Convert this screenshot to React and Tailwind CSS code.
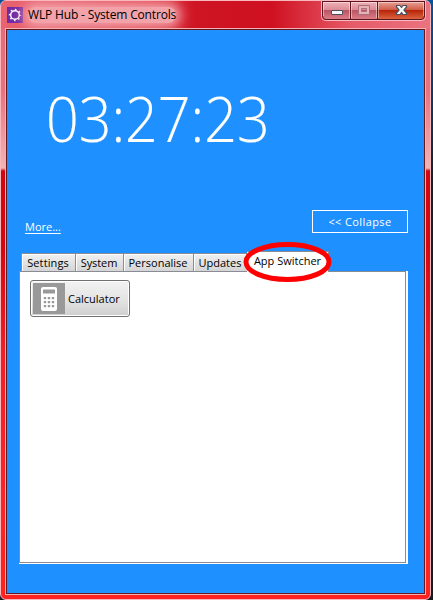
import React from 'react';

const tabs = [
  { label: 'Settings', box: 'w-[54px]', text: 'tracking-[0.1px]' },
  { label: 'System', box: 'w-[48px]', text: 'tracking-[-0.1px]' },
  { label: 'Personalise', box: 'w-[70px]', text: 'tracking-[0px]' },
  { label: 'Updates', box: 'w-[54px]', text: 'tracking-[0px]' },
];

function GearIcon() {
  return (
    <svg className="h-4 w-4 shrink-0" viewBox="0 0 16 16">
      <rect width="16" height="16" fill="#7129a5" />
      <circle cx="8" cy="8" r="4.3" fill="none" stroke="#fff" strokeWidth="1.4" />
      <circle cx="8" cy="8" r="5.5" fill="none" stroke="#fff" strokeWidth="1.4" strokeDasharray="1.6 2.72" strokeDashoffset="0.8" />
    </svg>
  );
}

function CalculatorIcon() {
  return (
    <svg className="h-[31px] w-8 shrink-0" viewBox="0 0 32 31">
      <rect width="32" height="31" fill="#999" />
      <rect x="8" y="4" width="16" height="24" rx="2" fill="#fff" />
      <rect x="10" y="6.5" width="12" height="4" rx=".5" fill="#999" />
      {[15, 19, 23].map((y) =>
        [11, 15, 19].map((x) => <rect key={`${x}-${y}`} x={x - 0.2} y={y - 1} width="2.4" height="2.2" rx="0.4" fill="#999" />)
      )}
    </svg>
  );
}

function WindowButtons() {
  return (
    <svg className="h-[22px] w-[106px] shrink-0" viewBox="0 0 106 22">
      <defs>
        <linearGradient id="pane" x1="0" y1="0" x2="0" y2="1">
          <stop offset="0" stopColor="#efb5bc" />
          <stop offset="0.46" stopColor="#dd8d96" />
          <stop offset="0.5" stopColor="#b95361" />
          <stop offset="1" stopColor="#df7f8a" />
        </linearGradient>
        <linearGradient id="close" x1="0" y1="0" x2="0" y2="1">
          <stop offset="0" stopColor="#e9a79c" />
          <stop offset="0.46" stopColor="#d2604b" />
          <stop offset="0.5" stopColor="#b52407" />
          <stop offset="1" stopColor="#df6743" />
        </linearGradient>
      </defs>
      <path d="M.5 0V15.500q0 4 4 4H100.500q4 0 4-4V0" fill="none" stroke="#f6bcc2" strokeWidth="1" />
      <path d="M1.500 0H56V18.500H5q-3.500 0-3.500-3.500z" fill="url(#pane)" />
      <path d="M56 0H103.500V15q0 3.500-3.500 3.500H56z" fill="url(#close)" />
      <path d="M1.500 0V15q0 3.500 3.500 3.500H100q3.500 0 3.500-3.500V0M29.500 0V18M56.500 0V18M1 .5H104" fill="none" stroke="#5d1520" />
      <path d="M2.500 1.500H28.500V17.500M30.500 17V1.500H55.500V17M57.500 17V1.500H102.500V15M2.500 1V15" fill="none" stroke="#fff" strokeOpacity=".45" />
      <rect x="10.500" y="9.500" width="11" height="4" rx=".5" fill="#f8f8f8" stroke="#4c4d60" />
      <path d="M37.500 4.500H48.500V13.500H37.500zM40.500 7.500H45.500V10.500H40.500z" fill="#e7b3b8" fillRule="evenodd" stroke="#a86f79" />
      <path d="M75.500 4.500H79L80.500 6.500L82 4.500H85.500V6L83 9L85.500 12V13.500H82L80.500 11.500L79 13.500H75.500V12L78 9L75.500 6z" fill="#f8f8f8" stroke="#4c4d60" strokeWidth="1.200" strokeLinejoin="round" />
    </svg>
  );
}

export default function App() {
  return (
    <div className="h-[600px] w-[433px] overflow-hidden bg-[linear-gradient(180deg,#06549d_0px,#0a3c68_90px,#16202a_180px,#171b20_600px)] font-['Open_Sans','Noto_Sans',sans-serif] text-[11px] leading-[14px] text-black">
      <div className="flex h-[600px] w-[431px] flex-col rounded-[6px] border border-[#f8b8bd] bg-[linear-gradient(180deg,#e96674_0px,#e8737f_90px,#efb5b7_167px,#cf0710_170px,#d20711_245px,#ee2028_350px,#fb2528_500px,#ff211f_600px)] px-[4px]">
        <div className="-mx-[4px] flex h-[27px] shrink-0 items-start overflow-hidden rounded-t-[5px] bg-[linear-gradient(90deg,#e96471_0px,#df3340_150px,#ce1524_195px,#cf1020_270px,#e65a68_350px,#ea7480_430px)] pl-1.5">
          <div className="flex grow items-center pt-1.5">
            <GearIcon />
            <span className="ml-[5px] whitespace-nowrap rounded-lg bg-[#f2a3aa] text-xs leading-[16px] tracking-[-0.16px] shadow-[0_0_12px_5px_#f2a3aa]">WLP Hub - System Controls</span>
          </div>
          <div className="mr-[3px]"><WindowButtons /></div>
        </div>
        <div className="flex h-[567px] shrink-0 flex-col border border-[#f3afb4]">
          <div className="flex grow flex-col border border-[#65191e] bg-[#1e90ff]">
            <div className="h-[171px] pl-[39px] pt-[44px]">
              <div className="w-max origin-left scale-x-[0.91] whitespace-nowrap text-[63px] font-light leading-[88px] text-white [-webkit-text-stroke:0.2px_white]">03:27:23</div>
            </div>
            <div className="flex h-[50px] items-start justify-between pl-[18px] pr-4">
              <span className="mt-[19px] text-white underline underline-offset-2">More...</span>
              <button className="mt-[9px] h-[23px] w-24 border border-white text-[11px] leading-[14px] tracking-[0.4px] text-white">&lt;&lt; Collapse</button>
            </div>
            <div className="flex h-[20px] items-end pl-[14px]">
              {tabs.map((tab) => (
                <div key={tab.label} className={`${tab.box} flex h-[18px] shrink-0 items-center justify-center whitespace-nowrap border-l border-t border-[#898c95] bg-linear-to-b from-[#f1f1f1] to-[#d5d5d5] pr-px shadow-[inset_1px_1px_0_#fff] ${tab.text}`}>{tab.label}</div>
              ))}
              <div className="relative z-10 -mb-px flex h-[21px] w-[82px] shrink-0 items-center justify-center whitespace-nowrap border-r border-t border-[#898c95] bg-white pb-[3px]">
                App Switcher
                <svg className="pointer-events-none absolute left-[-5px] top-[-11px] h-11 w-[90px]" viewBox="0 0 90 44">
                  <ellipse cx="45.500" cy="21" rx="41.500" ry="17.500" fill="none" stroke="#f00" strokeWidth="5" />
                </svg>
              </div>
            </div>
            <div className="ml-3 h-[293px] w-[389px] border-b border-r border-white bg-white pr-px">
              <div className="h-[292px] border border-[#898c95] bg-white pl-[10px] pt-2">
                <div className="flex h-[37px] w-[100px] items-center rounded-[3px] border border-[#707070] bg-linear-to-b from-[#f2f2f2] via-[#e5e5e5] to-[#cfcfcf] pl-[2px] shadow-[inset_0_0_0_1px_#fff]">
                  <CalculatorIcon />
                  <span className="ml-[3px] whitespace-nowrap">Calculator</span>
                </div>
              </div>
            </div>
          </div>
        </div>
      </div>
    </div>
  );
}
